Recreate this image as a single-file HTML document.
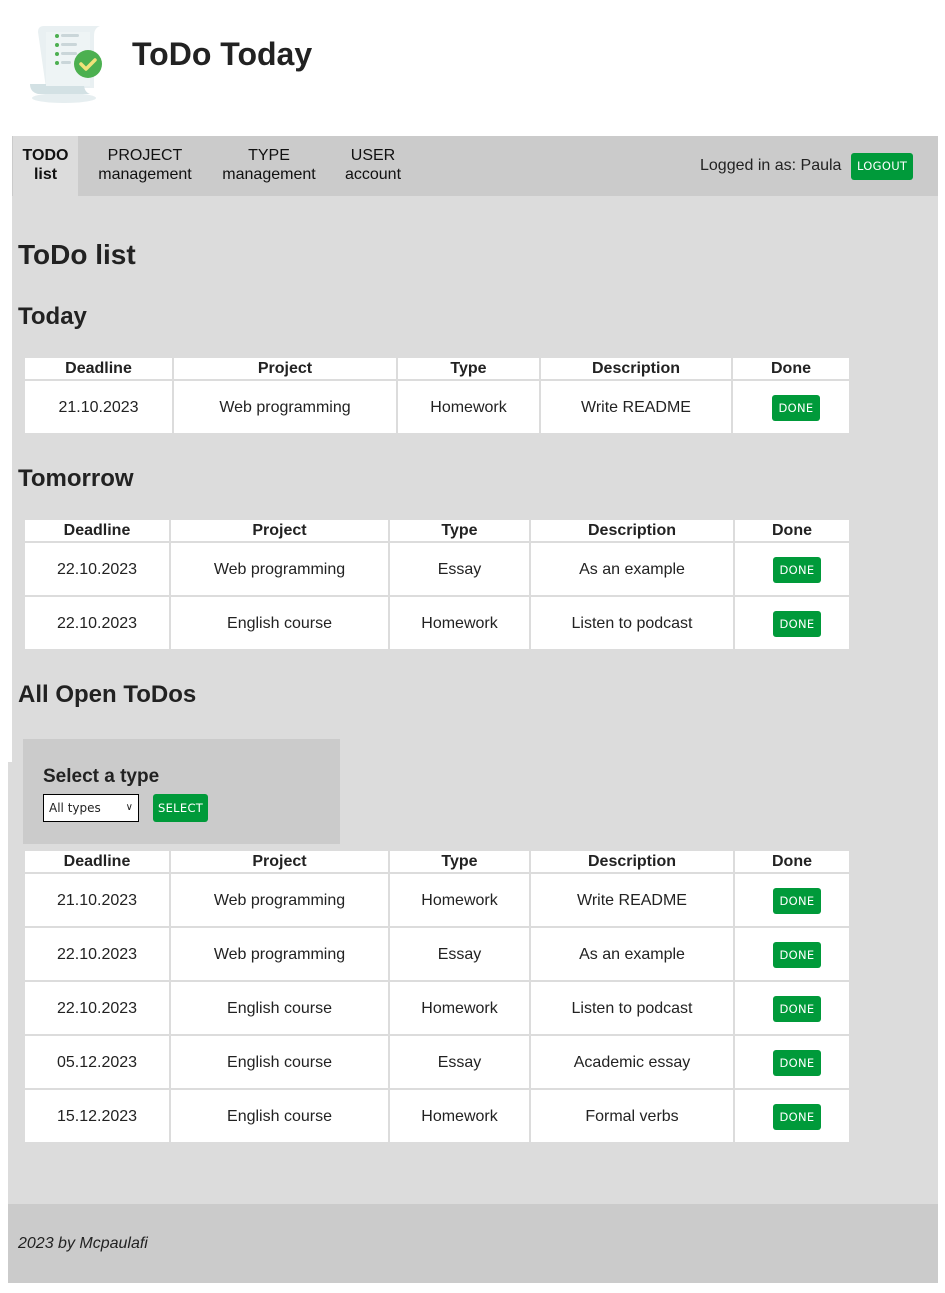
<!DOCTYPE html>
<html><head><meta charset="utf-8"><style>
*{margin:0;padding:0;box-sizing:border-box}
body{width:945px;height:1293px;background:#fff;font-family:"Liberation Sans",Arial,sans-serif;color:#222;position:relative;overflow:hidden}
.abs{position:absolute}
.bg1{left:12px;top:136px;width:926px;height:630px;background:#dcdcdc}
.bg2{left:8px;top:762px;width:930px;height:442px;background:#dcdcdc}
.nav{left:12px;top:136px;width:926px;height:60px;background:#cbcbcb}
.navi{position:absolute;top:146px;font-size:16px;text-align:center;line-height:19px;color:#111}
.btn{display:inline-block;background:#009a3a;color:#fff;border-radius:3px;font-size:12px;line-height:27px;padding:0 7px;letter-spacing:.3px;font-family:"DejaVu Sans","Liberation Sans",sans-serif;font-size:11.5px}
h1{position:absolute;font-size:28px;font-weight:bold}
h2{position:absolute;font-size:24px;font-weight:bold}
table{position:absolute;table-layout:fixed;border-collapse:separate;border-spacing:2px;left:23px}
td,th{background:#fff;text-align:center;font-size:16px}
th{height:21px;line-height:19px;font-weight:bold}
td{height:52px;padding-top:1px}
td .btn{line-height:26px;padding:0 7px;position:relative;left:5px}
</style></head><body>
<svg class="abs" style="left:24px;top:22px" width="84" height="84" viewBox="0 0 84 84">
<ellipse cx="40" cy="76" rx="32" ry="5" fill="#e6eef0"/>
<path d="M14 10 Q14 4 20 4 L76 4 Q70 6 70 14 L70 66 L22 66 Z" fill="#e9f0f2"/>
<path d="M6 62 Q6 70 14 72 L66 72 Q60 70 60 62 Z" fill="#d3e1e4"/>
<rect x="22" y="10" width="44" height="54" fill="#eef4f5"/>
<circle cx="33" cy="14" r="2" fill="#4caf50"/><rect x="37" y="12" width="18" height="3" rx="1.5" fill="#cad6d9"/>
<circle cx="33" cy="23" r="2" fill="#4caf50"/><rect x="37" y="21" width="16" height="3" rx="1.5" fill="#cad6d9"/>
<circle cx="33" cy="32" r="2" fill="#4caf50"/><rect x="37" y="30" width="16" height="3" rx="1.5" fill="#cad6d9"/>
<circle cx="33" cy="41" r="2" fill="#4caf50"/><rect x="37" y="39" width="10" height="3" rx="1.5" fill="#cad6d9"/>
<circle cx="64" cy="42" r="14" fill="#4cb050"/>
<path d="M57 42 L62 47 L71 38" stroke="#f1e27a" stroke-width="3.5" fill="none" stroke-linecap="round" stroke-linejoin="round"/>
</svg>
<div class="abs" style="left:132px;top:36px;font-size:32px;font-weight:bold;color:#222">ToDo Today</div>
<div class="abs bg1"></div><div class="abs bg2"></div>
<div class="abs nav"></div>
<div class="abs" style="left:13px;top:136px;width:65px;height:60px;background:#dcdcdc"></div>
<div class="navi" style="left:13px;width:65px;font-weight:bold">TODO<br>list</div>
<div class="navi" style="left:92px;width:106px">PROJECT<br>management</div>
<div class="navi" style="left:216px;width:106px">TYPE<br>management</div>
<div class="navi" style="left:338px;width:70px">USER<br>account</div>
<div class="abs" style="left:700px;top:157px;font-size:16px">Logged in as: Paula</div>
<div class="abs btn" style="left:851px;top:153px;line-height:27px;padding:0 6px">LOGOUT</div>
<h1 style="left:18px;top:239px">ToDo list</h1>
<h2 style="left:18px;top:303px">Today</h2>
<table style="top:356px"><colgroup><col style="width:147px"><col style="width:222px"><col style="width:141px"><col style="width:190px"><col style="width:116px"></colgroup>
<tr><th>Deadline</th><th>Project</th><th>Type</th><th>Description</th><th>Done</th></tr>
<tr><td>21.10.2023</td><td>Web programming</td><td>Homework</td><td>Write README</td><td><span class="btn">DONE</span></td></tr>
</table>
<h2 style="left:18px;top:465px">Tomorrow</h2>
<table style="top:518px"><colgroup><col style="width:144px"><col style="width:217px"><col style="width:139px"><col style="width:202px"><col style="width:114px"></colgroup>
<tr><th>Deadline</th><th>Project</th><th>Type</th><th>Description</th><th>Done</th></tr>
<tr><td>22.10.2023</td><td>Web programming</td><td>Essay</td><td>As an example</td><td><span class="btn">DONE</span></td></tr>
<tr><td>22.10.2023</td><td>English course</td><td>Homework</td><td>Listen to podcast</td><td><span class="btn">DONE</span></td></tr>
</table>
<h2 style="left:18px;top:681px">All Open ToDos</h2>
<div class="abs" style="left:23px;top:739px;width:317px;height:105px;background:#cbcbcb"></div>
<div class="abs" style="left:43px;top:766px;font-size:19px;font-weight:bold">Select a type</div>
<div class="abs" style="left:43px;top:794px;width:96px;height:28px;border:1px solid #000;background:#fff;font-size:13px;line-height:26px;padding-left:5px;font-family:'DejaVu Sans',sans-serif;font-size:12px">All types<span style="position:absolute;right:5px;top:0;font-size:10px">&#x2228;</span></div>
<div class="abs btn" style="left:153px;top:794px;line-height:28px;padding:0 5px">SELECT</div>
<table style="top:849px"><colgroup><col style="width:144px"><col style="width:217px"><col style="width:139px"><col style="width:202px"><col style="width:114px"></colgroup>
<tr><th>Deadline</th><th>Project</th><th>Type</th><th>Description</th><th>Done</th></tr>
<tr><td>21.10.2023</td><td>Web programming</td><td>Homework</td><td>Write README</td><td><span class="btn">DONE</span></td></tr>
<tr><td>22.10.2023</td><td>Web programming</td><td>Essay</td><td>As an example</td><td><span class="btn">DONE</span></td></tr>
<tr><td>22.10.2023</td><td>English course</td><td>Homework</td><td>Listen to podcast</td><td><span class="btn">DONE</span></td></tr>
<tr><td>05.12.2023</td><td>English course</td><td>Essay</td><td>Academic essay</td><td><span class="btn">DONE</span></td></tr>
<tr><td>15.12.2023</td><td>English course</td><td>Homework</td><td>Formal verbs</td><td><span class="btn">DONE</span></td></tr>
</table>
<div class="abs" style="left:8px;top:1204px;width:930px;height:79px;background:#cbcbcb"></div>
<div class="abs" style="left:18px;top:1235px;font-size:16px;font-style:italic">2023 by Mcpaulafi</div>
</body></html>
